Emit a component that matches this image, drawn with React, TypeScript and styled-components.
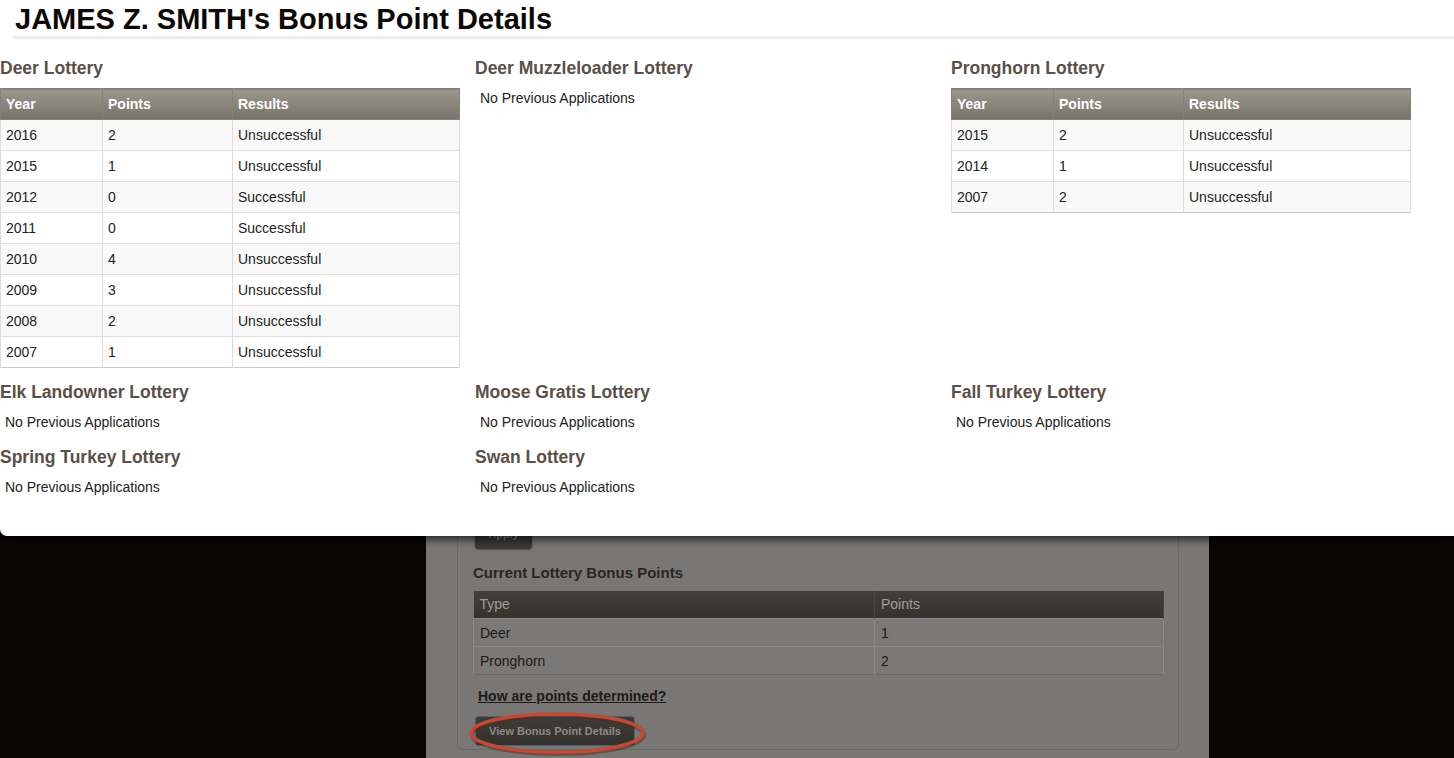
import React from "react"
import styled, { createGlobalStyle } from "styled-components"

interface Entry {
  year: number;
  points: number;
  result: string;
}

interface Lottery {
  title: string;
  entries: Entry[];
}

const lotteries: Lottery[] = [
  {
    title: "Deer Lottery",
    entries: [
      { year: 2016, points: 2, result: "Unsuccessful" },
      { year: 2015, points: 1, result: "Unsuccessful" },
      { year: 2012, points: 0, result: "Successful" },
      { year: 2011, points: 0, result: "Successful" },
      { year: 2010, points: 4, result: "Unsuccessful" },
      { year: 2009, points: 3, result: "Unsuccessful" },
      { year: 2008, points: 2, result: "Unsuccessful" },
      { year: 2007, points: 1, result: "Unsuccessful" },
    ],
  },
  { title: "Deer Muzzleloader Lottery", entries: [] },
  {
    title: "Pronghorn Lottery",
    entries: [
      { year: 2015, points: 2, result: "Unsuccessful" },
      { year: 2014, points: 1, result: "Unsuccessful" },
      { year: 2007, points: 2, result: "Unsuccessful" },
    ],
  },
  { title: "Elk Landowner Lottery", entries: [] },
  { title: "Moose Gratis Lottery", entries: [] },
  { title: "Fall Turkey Lottery", entries: [] },
  { title: "Spring Turkey Lottery", entries: [] },
  { title: "Swan Lottery", entries: [] },
]

const current = [
  { type: "Deer", points: 1 },
  { type: "Pronghorn", points: 2 },
]

export default function App() {
  return (
    <>
      <GlobalStyle />
      <Page>
        <Panel>
          <PanelBox>
            <ApplyButton>Apply</ApplyButton>
            <CurrentTitle>Current Lottery Bonus Points</CurrentTitle>
            <CurrentTable>
              <thead>
                <tr>
                  <CurrentHead $width={401}>Type</CurrentHead>
                  <CurrentHead>Points</CurrentHead>
                </tr>
              </thead>
              <tbody>
                {current.map((c) => (
                  <tr key={c.type}>
                    <CurrentCell>{c.type}</CurrentCell>
                    <CurrentCell>{c.points}</CurrentCell>
                  </tr>
                ))}
              </tbody>
            </CurrentTable>
            <HelpLink href="#">How are points determined?</HelpLink>
            <DetailsWrap>
              <DetailsButton>View Bonus Point Details</DetailsButton>
              <Circle width="180" height="46" viewBox="0 0 180 46">
                <ellipse cx="90" cy="24" rx="86" ry="19" fill="none" stroke="#3a3430" strokeWidth="4" opacity="0.5" />
                <ellipse cx="89" cy="22" rx="86" ry="19" fill="none" stroke="#c9472f" strokeWidth="3.5" />
              </Circle>
            </DetailsWrap>
          </PanelBox>
        </Panel>

        <Modal>
          <Title>JAMES Z. SMITH's Bonus Point Details</Title>
          <Grid>
            {lotteries.map((l) => (
              <Section key={l.title}>
                <SectionTitle>{l.title}</SectionTitle>
                {l.entries.length === 0 ? (
                  <Empty>No Previous Applications</Empty>
                ) : (
                  <Table>
                    <thead>
                      <tr>
                        <Th $width={102}>Year</Th>
                        <Th $width={130}>Points</Th>
                        <Th>Results</Th>
                      </tr>
                    </thead>
                    <tbody>
                      {l.entries.map((e, i) => (
                        <Row key={e.year} $odd={i % 2 === 0}>
                          <Td>{e.year}</Td>
                          <Td>{e.points}</Td>
                          <Td>{e.result}</Td>
                        </Row>
                      ))}
                    </tbody>
                  </Table>
                )}
              </Section>
            ))}
          </Grid>
        </Modal>
      </Page>
    </>
  )
}

const GlobalStyle = createGlobalStyle`
  html, body {
    margin: 0;
    padding: 0;
    background: #0a0604;
    font-family: "Liberation Sans", Arial, sans-serif;
  }
`;

const Page = styled.div`
  position: relative;
  height: 758px;
  overflow: hidden;
  background: #0a0604;
  display: flex;
  padding-left: 426px;
  box-sizing: border-box;
`;

const Panel = styled.div`
  width: 783px;
  height: 100%;
  background: #797775;
  display: flex;
  flex-direction: column;
  justify-content: flex-end;
  padding: 0 30px 8px 31px;
  box-sizing: border-box;
`;

const PanelBox = styled.div`
  border: 1px solid #6a6866;
  border-radius: 5px;
  padding: 0 15px 3px 15px;
  display: flex;
  flex-direction: column;
  align-items: flex-start;
`;

const ApplyButton = styled.div`
  margin-left: 2px;
  width: 57px;
  height: 30px;
  border-radius: 4px;
  background: #3b3835;
  box-shadow: 0 1px 2px rgba(0, 0, 0, 0.4);
  color: #8a8784;
  font-size: 11px;
  font-weight: bold;
  display: flex;
  align-items: flex-end;
  justify-content: center;
  padding-bottom: 9px;
  box-sizing: border-box;
`;

const CurrentTitle = styled.div`
  margin-top: 15px;
  font-size: 15px;
  font-weight: bold;
  line-height: 18px;
  color: #2a2522;
`;

const CurrentTable = styled.table`
  margin-top: 9px;
  width: 691px;
  border-collapse: collapse;
  table-layout: fixed;
  font-size: 14px;
  border-bottom: 1px solid #6c6a68;
`;

const CurrentHead = styled.th<{ $width?: number }>`
  width: ${(p) => (p.$width ? `${p.$width}px` : "auto")};
  height: 28px;
  padding: 0 6px;
  box-sizing: border-box;
  text-align: left;
  font-weight: normal;
  color: #a19e9a;
  background: linear-gradient(#423e3a, #35312d);
  border-right: 1px solid #4a4642;
`;

const CurrentCell = styled.td`
  height: 27px;
  padding: 0 6px;
  color: #1c1917;
  background: #7b7977;
  border-top: 1px solid #8b8987;
  border-right: 1px solid #8b8987;
  border-left: 1px solid #8b8987;
`;

const HelpLink = styled.a`
  margin: 12px 0 0 5px;
  font-size: 14px;
  font-weight: bold;
  line-height: 18px;
  color: #1e1b19;
  text-decoration: underline;
`;

const DetailsWrap = styled.div`
  position: relative;
  margin-top: 11px;
  margin-left: 2px;
`;

const DetailsButton = styled.div`
  width: 160px;
  height: 30px;
  box-sizing: border-box;
  border: 1px solid #4f5e78;
  border-radius: 3px;
  background: linear-gradient(#3f3c38, #34312d);
  color: #8d8a86;
  font-size: 11px;
  font-weight: bold;
  display: flex;
  align-items: center;
  justify-content: center;
`;

const Circle = styled.svg`
  position: absolute;
  left: -7px;
  top: -5px;
  overflow: visible;
`;

const Modal = styled.div`
  position: absolute;
  top: 0;
  left: 0;
  width: 1454px;
  height: 536px;
  background: #fff;
  border-bottom-left-radius: 7px;
  box-shadow: 0 3px 10px rgba(0, 0, 0, 0.75);
  box-sizing: border-box;
`;

const Title = styled.h1`
  margin: 0 0 0 13px;
  padding: 2px 0 0 2px;
  font-size: 29px;
  line-height: 34px;
  font-weight: bold;
  color: #0d0806;
  border-bottom: 3px solid #eeeae8;
`;

const Grid = styled.div`
  display: grid;
  grid-template-columns: 475px 476px 1fr;
  align-items: start;
  padding-top: 5px;
`;

const Section = styled.div`
  padding-top: 14px;
`;

const SectionTitle = styled.h3`
  margin: 0 0 10px 0;
  font-size: 17.5px;
  line-height: 20px;
  font-weight: bold;
  color: #5a5047;
`;

const Empty = styled.p`
  margin: 0;
  padding: 0 5px;
  font-size: 14px;
  line-height: 21px;
  color: #222;
`;

const Table = styled.table`
  width: 460px;
  border-collapse: collapse;
  font-size: 14px;
  border-bottom: 1px solid #c8c8c8;
`;

const Th = styled.th<{ $width?: number }>`
  width: ${(p) => (p.$width ? `${p.$width}px` : "auto")};
  height: 31px;
  padding: 0 5px;
  box-sizing: border-box;
  text-align: left;
  font-weight: bold;
  color: #fff;
  background: linear-gradient(#9c978c, #77736a);
  border: 1px solid #85817a;
`;

const Row = styled.tr<{ $odd: boolean }>`
  background: ${(p) => (p.$odd ? "#f9f9f9" : "#fff")};
`;

const Td = styled.td`
  height: 31px;
  padding: 0 5px;
  box-sizing: border-box;
  color: #222;
  border: 1px solid #ddd;
  border-bottom: none;
`;
